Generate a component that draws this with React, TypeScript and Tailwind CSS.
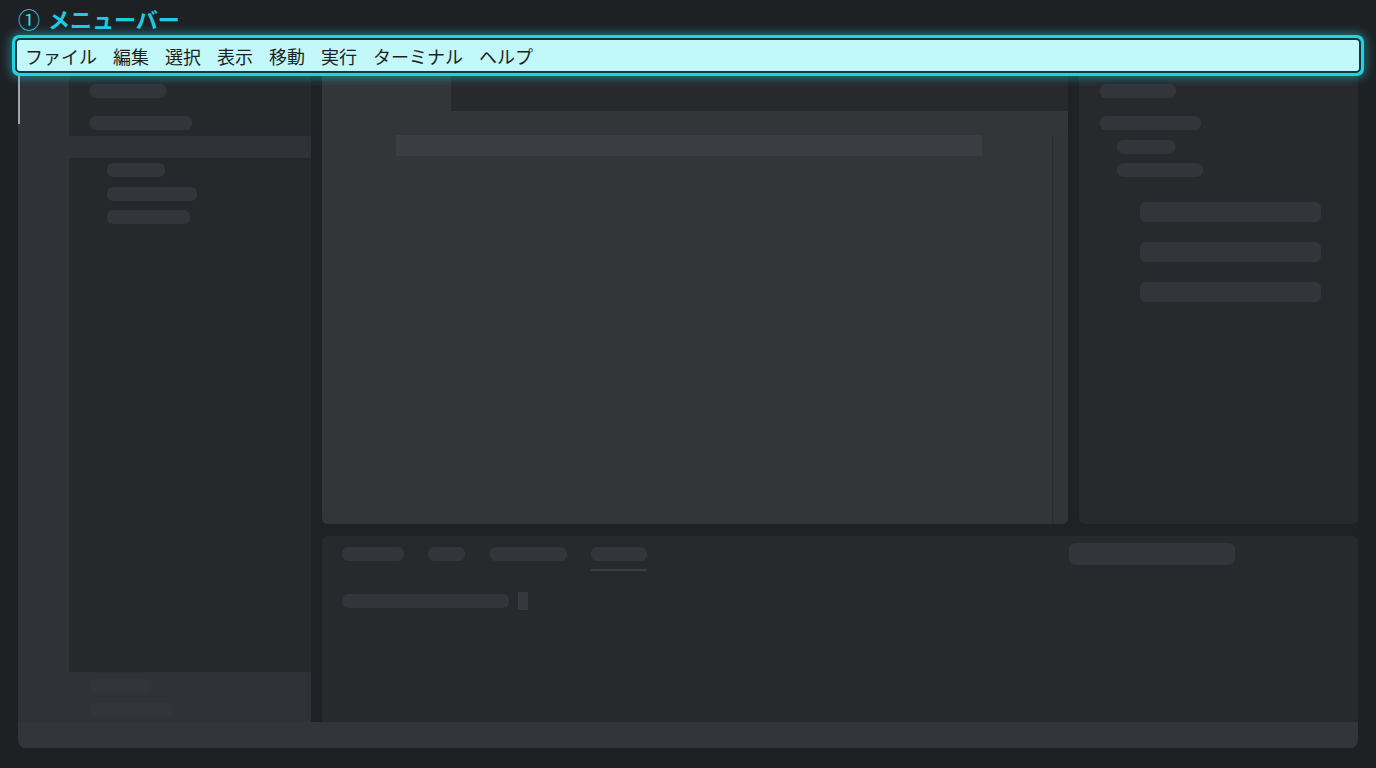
import React from 'react';

const menuItems = ['ファイル', '編集', '選択', '表示', '移動', '実行', 'ターミナル', 'ヘルプ'];

function Bar({ w, h = 'h-[14px]', className = '' }: { w: string; h?: string; className?: string }) {
	return <div className={`${w} ${h} rounded-md bg-[#323539] ${className}`} />;
}

export default function App() {
	return (
		<div
			className="w-[1376px] h-[768px] overflow-hidden bg-[#1e2124] flex flex-col"
			style={{ fontFamily: '"Noto Sans CJK JP", "Noto Sans", sans-serif' }}
		>
			{/* Title */}
			<div className="h-[35px] pl-[18px] pt-[2px] flex items-start text-[#1fcbe0] text-[22px] leading-[32px] font-bold">
				<span className="font-normal text-[#3fd6e6] mr-[8px]">①</span>
				<span>メニューバー</span>
			</div>

			{/* Highlighted menu bar */}
			<div className="relative z-10 mx-[12px] h-[41px] rounded-[7px] bg-[#1fd3e3] p-[3px] shadow-[0_0_10px_2px_rgba(34,211,238,0.45)]">
				<div className="h-full rounded-[5px] border-2 border-[#17363b] bg-[#c2f8fa] flex items-center pl-[8px] gap-[16px] text-[18px] text-[#1d1f20]">
					{menuItems.map((m) => (
						<span key={m} className="leading-none">
							{m}
						</span>
					))}
				</div>
			</div>

			{/* Window frame */}
			<div className="mx-[18px] w-[1340px] h-[672px] bg-[#2f3236] rounded-b-lg flex flex-col overflow-hidden">
				<div className="h-[646px] flex">
					{/* Activity bar */}
					<div className="w-[51px] shrink-0">
						<div className="w-[2px] h-[48px] bg-[#a3a6a9]" />
					</div>

					{/* Sidebar */}
					<div className="w-[242px] shrink-0 flex flex-col">
						<div className="h-[596px] bg-[#26292c] flex flex-col pt-[8px]">
							<Bar w="w-[76px]" className="ml-[21px]" />
							<Bar w="w-[102px]" className="ml-[21px] mt-[18px]" />
							<div className="h-[22px] mt-[6px] bg-[#2f3236]" />
							<Bar w="w-[58px]" className="ml-[38px] mt-[5px]" />
							<Bar w="w-[90px]" className="ml-[38px] mt-[10px]" />
							<Bar w="w-[83px]" className="ml-[38px] mt-[9px]" />
						</div>
						<div className="flex-1 flex flex-col pt-[7px] pl-[21px] gap-[10px]">
							<Bar w="w-[62px]" className="bg-[#383b3f]" />
							<Bar w="w-[83px]" className="bg-[#383b3f]" />
						</div>
					</div>

					{/* Main area */}
					<div className="flex-1 bg-[#1f2225] pl-[11px] flex flex-col">
						<div className="h-[448px] flex">
							{/* Editor */}
							<div className="w-[746px] bg-[#333639] rounded-b-md flex flex-col overflow-hidden">
								<div className="h-[35px] flex">
									<div className="w-[129px]" />
									<div className="flex-1 bg-[#27292d]" />
								</div>
								<div className="flex-1 flex pt-[24px]">
									<div className="flex-1">
										<div className="ml-[74px] w-[586px] h-[21px] bg-[#3a3d41]" />
									</div>
									<div className="w-[16px] border-l border-[#2a2d30] bg-[#323538]" />
								</div>
							</div>
							<div className="w-[11px]" />
							{/* Right panel */}
							<div className="flex-1 bg-[#27292c] rounded-b-md flex flex-col pt-[8px] pl-[21px]">
								<Bar w="w-[76px]" />
								<Bar w="w-[101px]" className="mt-[18px]" />
								<Bar w="w-[58px]" className="ml-[17px] mt-[10px]" />
								<Bar w="w-[86px]" className="ml-[17px] mt-[9px]" />
								<Bar w="w-[181px]" h="h-[20px]" className="ml-[40px] mt-[25px]" />
								<Bar w="w-[181px]" h="h-[20px]" className="ml-[40px] mt-[20px]" />
								<Bar w="w-[181px]" h="h-[20px]" className="ml-[40px] mt-[20px]" />
							</div>
						</div>
						<div className="h-[12px]" />
						{/* Bottom panel */}
						<div className="flex-1 bg-[#27292c] rounded-t-md relative">
							<div className="flex items-start pt-[11px] pl-[20px]">
								<Bar w="w-[62px]" />
								<Bar w="w-[37px]" className="ml-[24px]" />
								<Bar w="w-[77px]" className="ml-[25px]" />
								<div className="ml-[24px] flex flex-col">
									<Bar w="w-[56px]" />
									<div className="mt-[8px] h-[2px] w-[56px] bg-[#3a3d41]" />
								</div>
								<Bar w="w-[166px]" h="h-[22px]" className="ml-[422px] -mt-[4px]" />
							</div>
							<div className="flex items-center pl-[20px] mt-[21px]">
								<Bar w="w-[167px]" />
								<div className="ml-[9px] w-[10px] h-[18px] bg-[#35383c]" />
							</div>
						</div>
					</div>
				</div>
				{/* Status bar */}
				<div className="flex-1 bg-[#323539]" />
			</div>
		</div>
	);
}
